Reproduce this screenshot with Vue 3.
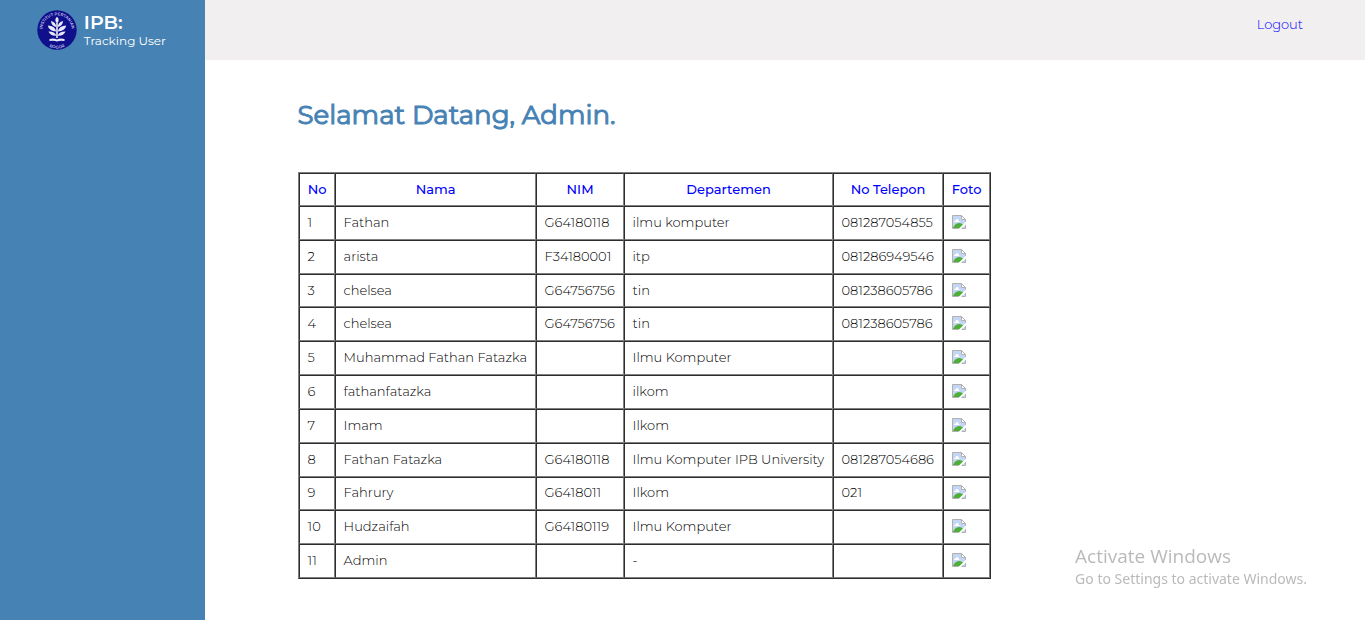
<script setup>
const columns = [
  { label: 'No', name: 'no' },
  { label: 'Nama', name: 'nama' },
  { label: 'NIM', name: 'nim' },
  { label: 'Departemen', name: 'departemen' },
  { label: 'No Telepon', name: 'telepon' },
  { label: 'Foto', name: 'foto' },
]

const users = [
  { nama: 'Fathan', nim: 'G64180118', departemen: 'ilmu komputer', telepon: '081287054855' },
  { nama: 'arista', nim: 'F34180001', departemen: 'itp', telepon: '081286949546' },
  { nama: 'chelsea', nim: 'G64756756', departemen: 'tin', telepon: '081238605786' },
  { nama: 'chelsea', nim: 'G64756756', departemen: 'tin', telepon: '081238605786' },
  { nama: 'Muhammad Fathan Fatazka', nim: '', departemen: 'Ilmu Komputer', telepon: '' },
  { nama: 'fathanfatazka', nim: '', departemen: 'ilkom', telepon: '' },
  { nama: 'Imam', nim: '', departemen: 'Ilkom', telepon: '' },
  { nama: 'Fathan Fatazka', nim: 'G64180118', departemen: 'Ilmu Komputer IPB University', telepon: '081287054686' },
  { nama: 'Fahrury', nim: 'G6418011', departemen: 'Ilkom', telepon: '021' },
  { nama: 'Hudzaifah', nim: 'G64180119', departemen: 'Ilmu Komputer', telepon: '' },
  { nama: 'Admin', nim: '', departemen: '-', telepon: '' },
]
</script>

<template>
  <div class="page">
    <aside class="sidebar">
      <div class="brand">
        <svg class="logo" viewBox="0 0 40 40" aria-hidden="true">
          <defs>
            <path id="ring-top" d="M7.2 27.5 A14.8 14.8 0 1 1 32.8 27.5" />
            <path id="ring-bottom" d="M7 33 A18.3 18.3 0 0 0 33 33" />
          </defs>
          <circle cx="20" cy="20" r="19.7" fill="#10108c" />
          <text class="ring-text"><textPath href="#ring-top" startOffset="50%" text-anchor="middle">INSTITUT PERTANIAN</textPath></text>
          <text class="ring-text"><textPath href="#ring-bottom" startOffset="50%" text-anchor="middle">BOGOR</textPath></text>
          <g fill="#e8eaf8">
            <path d="M20 6.8 Q23.4 10 20 13.4 Q16.6 10 20 6.8Z" />
            <path d="M19.3 17 Q14.2 15.8 14 11 Q18.8 12 19.3 17Z" />
            <path d="M20.7 17 Q25.8 15.8 26 11 Q21.2 12 20.7 17Z" />
            <path d="M19.3 21.6 Q11.8 21.2 10.8 15.6 Q17.8 15.8 19.3 21.6Z" />
            <path d="M20.7 21.6 Q28.2 21.2 29.2 15.6 Q22.2 15.8 20.7 21.6Z" />
            <path d="M19.3 25.6 Q13.5 26 11.5 21.4 Q17.5 21.2 19.3 25.6Z" />
            <path d="M20.7 25.6 Q26.5 26 28.5 21.4 Q22.5 21.2 20.7 25.6Z" />
            <path d="M19.2 13h1.6v15h-1.6z" />
            <path d="M12.5 28.9 Q17 27.9 20 29.4 Q23 27.9 27.5 28.9 V31 Q23 30.2 20 31.4 Q17 30.2 12.5 31Z" />
          </g>
        </svg>
        <div class="brand-text">
          <strong>IPB:</strong>
          <span>Tracking User</span>
        </div>
      </div>
    </aside>

    <div class="content">
      <header class="topbar">
        <a href="#logout">Logout</a>
      </header>

      <main>
        <h1>Selamat Datang, Admin.</h1>
        <table>
          <colgroup>
            <col v-for="col in columns" :key="col.name" :class="'col-' + col.name" />
          </colgroup>
          <thead>
            <tr>
              <th v-for="col in columns" :key="col.name" scope="col">{{ col.label }}</th>
            </tr>
          </thead>
          <tbody>
            <tr v-for="(user, index) in users" :key="index">
              <td>{{ index + 1 }}</td>
              <td>{{ user.nama }}</td>
              <td>{{ user.nim }}</td>
              <td>{{ user.departemen }}</td>
              <td>{{ user.telepon }}</td>
              <td>
                <svg class="photo" viewBox="0 0 14 14" aria-hidden="true">
                  <path d="M.5 .5H9.5L13.5 4.5V13.5H.5Z" fill="#c3d6f5" stroke="#b0b0b0" />
                  <path d="M2 7Q2 5.5 3.5 5.5Q4 3.5 5.5 4Q7 4.5 6.5 6Q7.5 6 7.5 7Z" fill="#fff" />
                  <path d="M1 13Q2.5 8.5 7 8Q10 8 11 9.5V13Z" fill="#4fae37" />
                  <path d="M9.5 .5V4.5H13.5Z" fill="#fff" stroke="#b0b0b0" />
                  <path d="M14 6.5L6.5 14H9L14 9.5Z" fill="#fff" />
                </svg>
              </td>
            </tr>
          </tbody>
        </table>
      </main>
    </div>

    <div class="watermark">
      <p class="watermark-title">Activate Windows</p>
      <p>Go to Settings to activate Windows.</p>
    </div>
  </div>
</template>

<style>
body {
  margin: 0;
  background: #fff;
}
</style>

<style scoped>
.page {
  display: flex;
  min-height: 100vh;
  font-family: Montserrat, Inter, "Liberation Sans", sans-serif;
  font-size: 13px;
  line-height: 16px;
  color: #000;
}

.sidebar {
  flex: 0 0 15%;
  background: #4682b4;
}

.brand {
  display: flex;
  justify-content: center;
  gap: 7px;
  padding: 10px 2px 0 0;
  color: #fff;
}

.logo {
  width: 40px;
  height: 40px;
}

.ring-text {
  font-size: 4px;
  font-weight: 600;
  fill: #c4c6ea;
}

.brand-text {
  display: flex;
  flex-direction: column;
  padding-top: 2px;
  font-size: 12px;
}

.brand-text strong {
  font-size: 19px;
  font-weight: 600;
  line-height: 21px;
}

.content {
  flex: 1;
  min-width: 0;
}

.topbar {
  display: flex;
  justify-content: flex-end;
  box-sizing: border-box;
  height: 60px;
  padding: 16px 62px 0 0;
  background: #f1eff0;
}

.topbar a {
  font-weight: 300;
  color: #00f;
  text-decoration: none;
}

main {
  padding: 38px 8% 40px;
}

h1 {
  margin: 0 0 40px;
  font-size: 26px;
  font-weight: 400;
  line-height: 34px;
  color: #4682b4;
  -webkit-text-stroke: 1px #4682b4;
}

table {
  height: 407px;
  border: 1px solid;
  border-color: #808080 #2c2c2c #2c2c2c #808080;
  border-spacing: 0;
}

th,
td {
  box-sizing: border-box;
  height: 33px;
  padding: 0 7px 2px 8px;
  border: 1px solid;
  border-color: #2c2c2c #808080 #808080 #2c2c2c;
  white-space: nowrap;
}

th {
  font-weight: 500;
  color: #00f;
}

td {
  font-weight: 300;
  text-align: left;
}

.col-no { width: 36px; }
.col-nama { width: 201px; }
.col-nim { width: 88px; }
.col-departemen { width: 209px; }
.col-telepon { width: 110px; }
.col-foto { width: 47px; }

.photo {
  display: block;
  width: 14px;
  height: 14px;
}

.watermark {
  position: fixed;
  right: 58px;
  bottom: 31px;
  font-family: "Segoe UI", "Noto Sans", sans-serif;
  font-size: 14px;
  line-height: 20px;
  color: #bababa;
}

.watermark p {
  margin: 0;
}

.watermark .watermark-title {
  font-family: "Segoe UI", "Open Sans", sans-serif;
  font-size: 19px;
  line-height: 26px;
}
</style>
